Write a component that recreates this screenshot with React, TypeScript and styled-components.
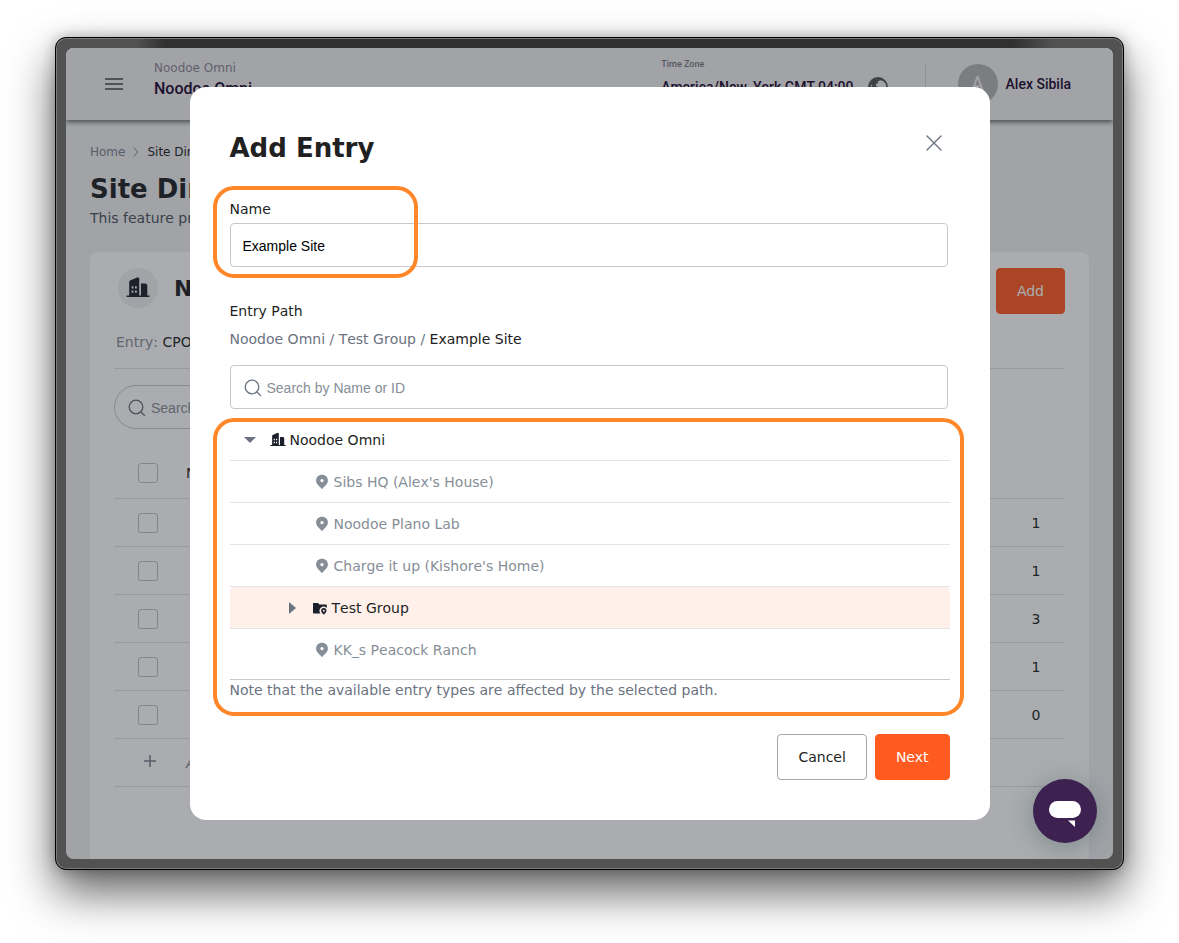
import React from "react";
import styled, { createGlobalStyle } from "styled-components";
import { MdMenu } from "react-icons/md";

const sans = `"DejaVu Sans", Verdana, sans-serif`;
const roboto = `Roboto, "Liberation Sans", sans-serif`;
const arial = `"Liberation Sans", Arial, sans-serif`;

const GlobalStyle = createGlobalStyle`
  * { box-sizing: border-box; }
  body { margin: 0; background: #fff; font: 14px/20px ${sans}; font-kerning: none; color: #1d1f24; }
  h1, h2, p { margin: 0; }
  button, input { margin: 0; }
`;

const Desk = styled.div`
  padding: 37px 55px 73px;
  overflow: hidden;
`;

const Bezel = styled.div`
  padding: 10px;
  border: 1px solid #000;
  border-radius: 11px;
  background:
    linear-gradient(to right, transparent 80px, #303030 110px, #303030 calc(100% - 110px), transparent calc(100% - 70px)) top / 100% 10px no-repeat,
    #525252;
  box-shadow: inset 0 0 0 1px #7c7c7c, 0 0 14px rgba(0, 0, 0, 0.28), 0 22px 46px rgba(0, 0, 0, 0.62);
`;

const Screen = styled.div`
  position: relative;
  overflow: hidden;
  border-radius: 8px;
  background: #f0f1f2;
`;

const TopBar = styled.header`
  display: flex;
  align-items: flex-start;
  height: 72px;
  padding: 0 42px 0 36px;
  background: #f1f1f2;
  box-shadow: 0 2px 5px rgba(0, 0, 0, 0.6);
`;

const MenuButton = styled.button`
  display: flex;
  align-self: center;
  padding: 0;
  border: 0;
  background: none;
  color: #6e6e73;
`;

const Account = styled.div`
  flex: 1;
  padding: 10px 0 0 28px;
`;

const AccountParent = styled.div`
  font-size: 12px;
  color: #8b8794;
`;

const AccountName = styled.div`
  font: 500 16px/22px ${roboto};
  color: #1c0530;
`;

const ZoneLabel = styled.div`
  font: 500 9px/20px ${roboto};
  color: #77777c;
`;

const Zone = styled.div`
  padding-top: 6px;
`;

const ZoneValue = styled.div`
  display: flex;
  align-items: center;
  gap: 12px;
  font: 500 14px/26px ${roboto};
  color: #1c0530;
  svg { color: #55555a; }
`;

const User = styled.div`
  display: flex;
  align-items: center;
  align-self: center;
  gap: 8px;
  height: 40px;
  margin-left: 35px;
  padding-left: 32px;
  border-left: 1px solid #d4d4d6;
  font: 500 14px/20px ${roboto};
  color: #1c0530;
`;

const Avatar = styled.span`
  display: grid;
  place-items: center;
  width: 40px;
  height: 40px;
  border-radius: 50%;
  background: #b4b4b5;
  color: #f1f1f2;
  font-size: 20px;
  font-weight: 400;
`;

const Main = styled.main`
  padding: 22px 24px 0;
`;

const Crumbs = styled.nav`
  display: flex;
  align-items: center;
  gap: 7px;
  font-size: 12px;
  a { color: #7b828d; text-decoration: none; }
`;

const PageTitle = styled.h1`
  margin-top: 12px;
  font-size: 26px;
  line-height: 30px;
`;

const PageNote = styled.p`
  margin-top: 4px;
  color: #4a5260;
`;

const Card = styled.section`
  margin-top: 24px;
  padding: 16px 24px 72px;
  border-radius: 8px 8px 0 0;
  background: #fff;
`;

const CardHead = styled.div`
  display: flex;
  align-items: flex-start;
  gap: 16px;
  padding-left: 4px;
`;

const CardIcon = styled.span`
  display: grid;
  place-items: center;
  width: 40px;
  height: 40px;
  border-radius: 50%;
  background: #f0f1f2;
`;

const CardTitle = styled.h2`
  flex: 1;
  font-size: 22px;
  line-height: 42px;
`;

const Button = styled.button<{ $primary?: boolean }>`
  height: 46px;
  padding: 0 20px;
  border: 1px solid ${(p) => (p.$primary ? "#ff5b21" : "#a5a7b0")};
  border-radius: 4px;
  background: ${(p) => (p.$primary ? "#ff5b21" : "#fff")};
  color: ${(p) => (p.$primary ? "#fff" : "#1d1f24")};
  font: 14px/20px ${sans};
`;

const EntryLine = styled.div`
  margin-top: 18px;
  padding: 0 2px 16px;
  border-bottom: 1px solid #e3e3e6;
  color: #8a9099;
  b { color: #1d1f24; font-weight: 400; }
`;

const SearchBox = styled.label<{ $pill?: boolean }>`
  display: flex;
  align-items: center;
  gap: 4px;
  height: 44px;
  width: ${(p) => (p.$pill ? "280px" : "auto")};
  margin: ${(p) => (p.$pill ? "16px 0 0" : "16px 2px 0 0")};
  padding: 2px 12px 0;
  border: 1px solid #c9c9cd;
  border-radius: ${(p) => (p.$pill ? "22px" : "4px")};
  color: #6b7280;
  svg { flex: none; }
  input {
    flex: 1;
    min-width: 0;
    padding: 0;
    border: 0;
    outline: 0;
    background: none;
    font: 14px/20px ${arial};
  }
  input::placeholder { color: #868e98; opacity: 1; }
`;

const Table = styled.table`
  width: 100%;
  margin-top: 18px;
  border-collapse: separate;
  border-spacing: 0;
  th, td {
    height: 48px;
    padding: 0;
    border-bottom: 1px solid #e3e3e6;
    text-align: left;
    font-weight: 400;
  }
  th { height: 52px; }
  th:first-child, td:first-child { width: 72px; padding-left: 24px; }
  th:last-child, td:last-child { width: 58px; text-align: center; }
`;

const Check = styled.input`
  display: block;
  appearance: none;
  width: 20px;
  height: 20px;
  border: 1px solid #c0c1c6;
  border-radius: 3px;
`;

const AddCell = styled.button`
  padding: 0;
  border: 0;
  background: none;
  color: #7b828d;
  font: italic 14px/20px ${sans};
  svg { display: block; }
`;

const Backdrop = styled.div`
  position: absolute;
  inset: 0;
  display: grid;
  place-items: center;
  background: rgba(32, 36, 45, 0.38);
`;

const Dialog = styled.div`
  width: 800px;
  max-width: 94%;
  padding: 40px;
  border-radius: 16px;
  background: #fff;
`;

const DialogHead = styled.div`
  display: flex;
  justify-content: space-between;
  align-items: flex-start;
  padding-right: 4px;
`;

const DialogTitle = styled.h2`
  font-size: 26px;
  line-height: 42px;
  color: #212121;
`;

const CloseButton = styled.button`
  display: flex;
  margin-top: 4px;
  padding: 0;
  border: 0;
  background: none;
  color: #6b7280;
`;

const Field = styled.div`
  position: relative;
  margin: 30px 2px 34px 0;
  label { display: block; }
`;

const TextInput = styled.input`
  display: block;
  width: 100%;
  height: 44px;
  margin-top: 4px;
  padding: 2px 12px 0;
  border: 1px solid #c9c9cd;
  border-radius: 4px;
  font: 14px/20px ${arial};
  color: #000;
`;

const Marker = styled.span<{ $name?: boolean }>`
  position: absolute;
  pointer-events: none;
  border: 4px solid #ff8729;
  border-radius: 21px;
  ${(p) => (p.$name ? "inset: -13px auto -11px -17px; width: 205px;" : "inset: -1px -14px -16px -17px;")}
`;

const Path = styled.div`
  margin-top: 8px;
  color: #6b7280;
  b { color: #212121; font-weight: 400; }
`;

const TreeArea = styled.div`
  position: relative;
  margin-top: 10px;
`;

const Tree = styled.ul`
  margin: 0;
  padding: 0 0 8px;
  list-style: none;
  border-bottom: 1px solid #c9c9cd;
`;

const indents = { root: 14, group: 56, site: 84 };

const Node = styled.li<{ $kind: keyof typeof indents; $selected?: boolean }>`
  display: flex;
  align-items: center;
  gap: 4px;
  height: 42px;
  padding-left: ${(p) => indents[p.$kind]}px;
  border-bottom: 1px solid #e3e3e6;
  border-radius: ${(p) => (p.$selected ? "4px 4px 0 0" : "0")};
  background: ${(p) => (p.$selected ? "#fff1ea" : "none")};
  color: ${(p) => (p.$kind === "site" ? "#868e98" : "#1d1f24")};
  &:last-child { border-bottom: 0; }
`;

const Toggle = styled.button`
  display: flex;
  margin-right: 10px;
  padding: 0;
  border: 0;
  background: none;
  color: #6b7280;
`;

const Hint = styled.p`
  color: #6b7280;
`;

const Actions = styled.div`
  display: flex;
  justify-content: flex-end;
  gap: 8px;
  margin-top: 34px;
`;

const ChatButton = styled.button`
  position: absolute;
  right: 16px;
  bottom: 16px;
  display: grid;
  place-items: center;
  width: 64px;
  height: 64px;
  padding: 0;
  border: 0;
  border-radius: 50%;
  background: #3d2151;
  box-shadow: 0 4px 24px rgba(60, 90, 90, 0.4);
`;

const Building = ({ size }: { size: number }) => (
  <svg width={size} height={size} viewBox="0 0 24 24" fill="#1b1f2a">
    <path
      fillRule="evenodd"
      d="M.6 19.400h2.600V5.600L4 4.600 11.800 1.300 13.200 2v17.400H15V7.600h4.800L21.300 9v10.400h2.200V21H.6zM5.600 10.300v2.200h1.800v-2.200zM9 10.300v2.200h1.800v-2.200zM5.600 14.600v2.200h1.800v-2.200zM9 14.600v2.200h1.800v-2.200z"
    />
  </svg>
);

const Globe = () => (
  <svg width="24" height="24" viewBox="0 0 24 24">
    <path
      fillRule="evenodd"
      fill="currentColor"
      d="M12 2a10 10 0 1 1 0 20 10 10 0 0 1 0-20zM14.500 5.200 12 6.200v2L10 9v2l3 1.200 1 2.800h2l.6 2.500 1.600.3A8 8 0 0 0 17.500 6.200zM4.200 13.500l2-3-1-1A8 8 0 0 0 10.500 19.800l.5-3.300-3-1.500z"
    />
  </svg>
);

const FolderPin = () => (
  <svg width="16" height="16" viewBox="0 0 16 16">
    <path d="M1 3h5l1.500 1.600h6.200c.7 0 1.100.4 1.100 1V8a3.800 3.800 0 0 0-6.300 5.600H2c-.6 0-1-.4-1-1z" fill="#1b1f2a" />
    <path fillRule="evenodd" d="M11.800 8a2.700 2.700 0 0 1 2.700 2.700c0 1.500-1.500 2.400-2.700 4-1.200-1.600-2.700-2.500-2.700-4A2.700 2.700 0 0 1 11.800 8zm0 1.700a1 1 0 1 0 0 2 1 1 0 0 0 0-2z" fill="#1b1f2a" />
  </svg>
);

const Pin = () => (
  <svg width="16" height="16" viewBox="0 0 16 16" fill="#868e98">
    <path fillRule="evenodd" d="M8 .8c3.400 0 5.900 2.400 5.900 5.700C13.900 10.200 10.600 11.800 8 15.200 5.400 11.800 2.100 10.200 2.100 6.500 2.100 3.200 4.600.8 8 .8zm0 4.100a1.700 1.700 0 1 0 0 3.400 1.700 1.700 0 0 0 0-3.400z" />
  </svg>
);

const Magnifier = () => (
  <svg width="20" height="20" viewBox="0 0 20 20" fill="none" stroke="currentColor" strokeWidth="1.300" strokeLinecap="round">
    <circle cx="9" cy="9" r="6.800" />
    <path d="M14 14l3.500 3.500" />
  </svg>
);

const sites = ["Sibs HQ (Alex's House)", "Noodoe Plano Lab", "Charge it up (Kishore's Home)"];
const counts = [1, 1, 3, 1, 0];

const SiteNode = ({ name }: { name: string }) => (
  <Node $kind="site">
    <Pin />
    {name}
  </Node>
);

export default function App() {
  return (
    <Desk>
      <GlobalStyle />
      <Bezel>
        <Screen>
          <TopBar>
            <MenuButton aria-label="Menu"><MdMenu size={24} /></MenuButton>
            <Account>
              <AccountParent>Noodoe Omni</AccountParent>
              <AccountName>Noodoe Omni</AccountName>
            </Account>
            <Zone>
              <ZoneLabel>Time Zone</ZoneLabel>
              <ZoneValue>America/New_York GMT-04:00 <Globe /></ZoneValue>
            </Zone>
            <User><Avatar>A</Avatar>Alex Sibila</User>
          </TopBar>
          <Main>
            <Crumbs>
              <a href="#home">Home</a>
              <svg width="8" height="12" viewBox="0 0 8 12" fill="none" stroke="#7b828d"><path d="M1.500 1.500L6 6l-4.500 4.500" /></svg>
              <span>Site Directory</span>
            </Crumbs>
            <PageTitle>Site Directory</PageTitle>
            <PageNote>This feature provides</PageNote>
            <Card>
              <CardHead>
                <CardIcon><Building size={24} /></CardIcon>
                <CardTitle>Noodoe Omni</CardTitle>
                <Button $primary>Add</Button>
              </CardHead>
              <EntryLine>Entry: <b>CPO</b></EntryLine>
              <SearchBox $pill>
                <Magnifier />
                <input aria-label="Search entries" placeholder="Search" />
              </SearchBox>
              <Table>
                <thead>
                  <tr>
                    <th><Check type="checkbox" aria-label="Select all" /></th>
                    <th>Name</th>
                    <th />
                  </tr>
                </thead>
                <tbody>
                  {counts.map((count, i) => (
                    <tr key={i}>
                      <td><Check type="checkbox" aria-label={`Select row ${i + 1}`} /></td>
                      <td />
                      <td>{count}</td>
                    </tr>
                  ))}
                  <tr>
                    <td>
                      <AddCell aria-label="Add row">
                        <svg width="24" height="20" viewBox="0 0 24 20" stroke="currentColor" strokeWidth="1.500"><path d="M12 5v12M6 11h12" /></svg>
                      </AddCell>
                    </td>
                    <td><AddCell>Add</AddCell></td>
                    <td />
                  </tr>
                </tbody>
              </Table>
            </Card>
          </Main>
          <Backdrop>
            <Dialog role="dialog" aria-labelledby="dialog-title">
              <DialogHead>
                <DialogTitle id="dialog-title">Add Entry</DialogTitle>
                <CloseButton aria-label="Close">
                  <svg width="24" height="24" viewBox="0 0 24 24" stroke="currentColor" strokeWidth="1.400" strokeLinecap="round"><path d="M5 5l14 14M19 5L5 19" /></svg>
                </CloseButton>
              </DialogHead>
              <Field>
                <label htmlFor="entry-name">Name</label>
                <TextInput id="entry-name" defaultValue="Example Site" />
                <Marker $name />
              </Field>
              <div>Entry Path</div>
              <Path>Noodoe Omni / Test Group / <b>Example Site</b></Path>
              <SearchBox>
                <Magnifier />
                <input aria-label="Search by Name or ID" placeholder="Search by Name or ID" />
              </SearchBox>
              <TreeArea>
                <Tree>
                  <Node $kind="root">
                    <Toggle aria-label="Collapse">
                      <svg width="12" height="12" viewBox="0 0 12 12" fill="currentColor"><path d="M0 3h12L6 9z" /></svg>
                    </Toggle>
                    <Building size={16} />
                    Noodoe Omni
                  </Node>
                  {sites.map((name) => <SiteNode key={name} name={name} />)}
                  <Node $kind="group" $selected>
                    <Toggle aria-label="Expand">
                      <svg width="12" height="12" viewBox="0 0 12 12" fill="currentColor"><path d="M3 0v12l7-6z" /></svg>
                    </Toggle>
                    <FolderPin />
                    Test Group
                  </Node>
                  <SiteNode name="KK_s Peacock Ranch" />
                </Tree>
                <Hint>Note that the available entry types are affected by the selected path.</Hint>
                <Marker />
              </TreeArea>
              <Actions>
                <Button>Cancel</Button>
                <Button $primary>Next</Button>
              </Actions>
            </Dialog>
          </Backdrop>
          <ChatButton aria-label="Open chat">
            <svg width="32" height="32" viewBox="0 0 32 32" fill="#fff">
              <rect y="6" width="32" height="17" rx="8.500" />
              <path d="M19 25.500h7V32z" />
            </svg>
          </ChatButton>
        </Screen>
      </Bezel>
    </Desk>
  );
}
